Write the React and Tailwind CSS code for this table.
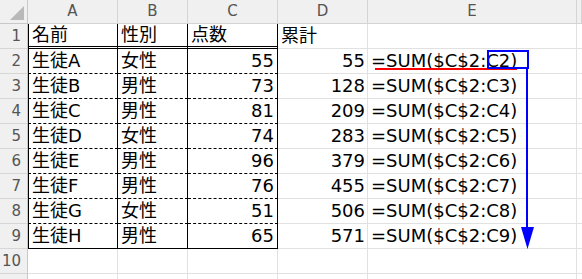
import React from "react";

const rows = [
  ["生徒A", "女性", 55, 55],
  ["生徒B", "男性", 73, 128],
  ["生徒C", "男性", 81, 209],
  ["生徒D", "女性", 74, 283],
  ["生徒E", "男性", 96, 379],
  ["生徒F", "男性", 76, 455],
  ["生徒G", "女性", 51, 506],
  ["生徒H", "男性", 65, 571],
];

const font = { fontFamily: '"DejaVu Sans", "Noto Sans CJK JP", sans-serif' };

function RowNum({ n }) {
  return (
    <div className="h-[25px] w-[28px] shrink-0 bg-[#f0f0f0] border-r border-b border-r-[#c8c8c8] border-b-[#d6d6d6] flex items-center justify-end pr-[6px] text-[15px] text-[#555] leading-none">
      {n}
    </div>
  );
}

export default function App() {
  return (
    <div className="relative w-[582px] h-[279px] bg-white overflow-hidden text-black" style={font}>
      {/* header row */}
      <div className="flex h-[24px]">
        <div className="w-[28px] h-[24px] shrink-0 bg-[#f0f0f0] border-r border-b border-[#c8c8c8] relative">
          <svg className="absolute left-0 top-0" width="27" height="23" viewBox="0 0 27 23">
            <polygon points="24,6 24,20 10,20" fill="#b9b9b9" />
          </svg>
        </div>
        {[
          ["A", "w-[90px]"],
          ["B", "w-[70px]"],
          ["C", "w-[90px]"],
          ["D", "w-[90px]"],
          ["E", "w-[209px]"],
          ["", "flex-1"],
        ].map(([l, w], i) => (
          <div
            key={i}
            className={`${w} h-[24px] shrink-0 bg-[#f0f0f0] border-r border-b border-[#d4d4d4] flex items-center justify-center text-[15px] text-[#555] leading-none`}
          >
            {l}
          </div>
        ))}
      </div>

      {/* row 1 */}
      <div className="flex h-[25px] text-[18px] leading-none">
        <RowNum n={1} />
        <div className="w-[90px] h-[25px] shrink-0 border-l border-l-black border-r border-r-black border-b-[3px] border-b-black [border-bottom-style:double] flex items-center pl-[3px]">名前</div>
        <div className="w-[70px] h-[25px] shrink-0 border-r border-r-black border-b-[3px] border-b-black [border-bottom-style:double] flex items-center pl-[3px]">性別</div>
        <div className="w-[90px] h-[25px] shrink-0 border-r border-r-black border-b-[3px] border-b-black [border-bottom-style:double] flex items-center pl-[3px]">点数</div>
        <div className="w-[90px] h-[25px] shrink-0 border-r border-b border-[#e1e1e1] flex items-center pl-[3px]">累計</div>
        <div className="w-[209px] h-[25px] shrink-0 border-r border-b border-[#e1e1e1]" />
        <div className="flex-1 h-[25px] border-b border-[#e1e1e1]" />
      </div>

      {rows.map((r, i) => {
        const last = i === rows.length - 1;
        const bb = last ? "border-b border-b-black" : "border-b border-b-black [border-bottom-style:dashed]";
        return (
          <div key={i} className="flex h-[25px] text-[18px] leading-none">
            <RowNum n={i + 2} />
            <div className={`w-[90px] h-[25px] shrink-0 border-l border-l-black border-r border-r-black ${bb} flex items-center pl-[3px]`}>
              {r[0]}
            </div>
            <div className={`w-[70px] h-[25px] shrink-0 border-r border-r-black ${bb} flex items-center pl-[3px]`}>{r[1]}</div>
            <div className={`w-[90px] h-[25px] shrink-0 border-r border-r-black ${bb} flex items-center justify-end pr-[3px]`}>{r[2]}</div>
            <div className="w-[90px] h-[25px] shrink-0 border-r border-b border-[#e1e1e1] flex items-center justify-end pr-[2px]">{r[3]}</div>
            <div className="w-[209px] h-[25px] shrink-0 border-r border-b border-[#e1e1e1] flex items-center pl-[3px]">
              {`=SUM($C$2:C${i + 2})`}
            </div>
            <div className="flex-1 h-[25px] border-b border-[#e1e1e1]" />
          </div>
        );
      })}

      {[10, null].map((n, k) => (
        <div key={k} className="flex h-[25px]">
          <RowNum n={n} />
          <div className="w-[90px] h-[25px] shrink-0 border-r border-b border-[#e1e1e1]" />
          <div className="w-[70px] h-[25px] shrink-0 border-r border-b border-[#e1e1e1]" />
          <div className="w-[90px] h-[25px] shrink-0 border-r border-b border-[#e1e1e1]" />
          <div className="w-[90px] h-[25px] shrink-0 border-r border-b border-[#e1e1e1]" />
          <div className="w-[209px] h-[25px] shrink-0 border-r border-b border-[#e1e1e1]" />
          <div className="flex-1 h-[25px] border-b border-[#e1e1e1]" />
        </div>
      ))}

      {/* annotations */}
      <svg className="absolute left-0 top-0 pointer-events-none" width="582" height="279" viewBox="0 0 582 279">
        <rect x="375" y="68" width="142" height="2" fill="#ff0000" />
        <rect x="488" y="51" width="40" height="17" fill="none" stroke="#0000ff" strokeWidth="2" />
        <rect x="526" y="68" width="2" height="162" fill="#0000ff" />
        <polygon points="521,227 534,227 527.5,249" fill="#0000ff" />
      </svg>
    </div>
  );
}
